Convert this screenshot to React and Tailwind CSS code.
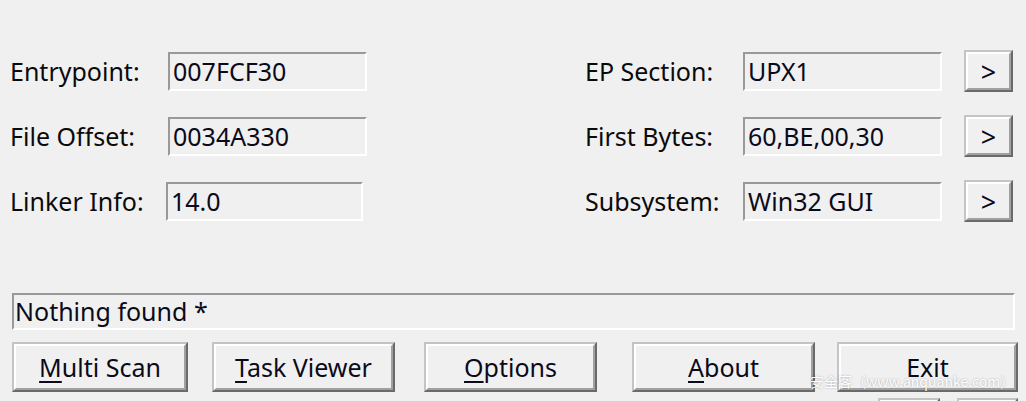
import React from "react";

function Edit({ value, w = "w-[199px]", ml = "" }) {
  return (
    <div
      className={`${w} ${ml} h-[39px] border-2 border-t-[#999999] border-l-[#999999] border-b-white border-r-white flex items-center pl-[3px] text-[25px] leading-none text-[#0a0a1a] whitespace-nowrap overflow-hidden`}
    >
      {value}
    </div>
  );
}

function Btn({ className = "", children }) {
  return (
    <div
      className={`${className} border-2 border-t-[#c4c4c4] border-l-[#c4c4c4] border-b-[#6a6a6a] border-r-[#6a6a6a] bg-[#f0f0f0]`}
    >
      <div className="h-full w-full border-2 border-t-white border-l-white border-b-[#a0a0a0] border-r-[#a0a0a0] flex items-center justify-center text-[25px] leading-none text-[#0a0a1a] whitespace-nowrap">
        {children}
      </div>
    </div>
  );
}

function Row({ l, lv, r, rv, lml = "", lw = "w-[199px]" }) {
  return (
    <div className="h-[42px] flex items-center">
      <div className="w-[585px] flex items-center">
        <div className="w-[168px] shrink-0 pl-[10px] text-[25px] leading-none text-[#0a0a0a] whitespace-nowrap">{l}</div>
        <Edit value={lv} w={lw} ml={lml} />
      </div>
      <div className="w-[158px] shrink-0 text-[25px] leading-none text-[#0a0a0a] whitespace-nowrap">{r}</div>
      <Edit value={rv} />
      <Btn className="ml-[22px] w-[49px] h-[42px]">
        <span className="text-[27px]">&gt;</span>
      </Btn>
    </div>
  );
}

export default function App() {
  return (
    <div className="relative w-[1026px] h-[401px] overflow-hidden bg-[#f0f0f0] font-['Noto_Sans',sans-serif]">
      <div className="pt-[50px] flex flex-col gap-[23px]">
        <Row l="Entrypoint:" lv="007FCF30" r="EP Section:" rv="UPX1" />
        <Row l="File Offset:" lv="0034A330" r="First Bytes:" rv="60,BE,00,30" />
        <Row l="Linker Info:" lv="14.0" r="Subsystem:" rv="Win32 GUI" lml="-ml-[2px]" lw="w-[197px]" />
      </div>

      <div className="mt-[71px] ml-[12px] w-[1003px] h-[37px] border-2 border-t-[#999999] border-l-[#999999] border-b-white border-r-white flex items-center pl-[1px] text-[25px] leading-none text-[#0a0a1a] whitespace-nowrap">
        Nothing found *
      </div>

      <div className="mt-[12px] flex h-[50px]">
        <Btn className="ml-[12px] w-[176px] h-[50px]">
          <span><span className="underline underline-offset-[4px]">M</span>ulti Scan</span>
        </Btn>
        <Btn className="ml-[24px] w-[183px] h-[50px]">
          <span><span className="underline underline-offset-[4px]">T</span>ask Viewer</span>
        </Btn>
        <Btn className="ml-[29px] w-[173px] h-[50px]">
          <span><span className="underline underline-offset-[4px]">O</span>ptions</span>
        </Btn>
        <Btn className="ml-[35px] w-[183px] h-[50px]">
          <span><span className="underline underline-offset-[4px]">A</span>bout</span>
        </Btn>
        <Btn className="ml-[22px] w-[181px] h-[50px]">
          <span>Exit</span>
        </Btn>
      </div>

      <div className="mt-[6px] flex">
        <Btn className="ml-[878px] w-[62px] h-[40px]"> </Btn>
        <Btn className="ml-[17px] w-[61px] h-[40px]"> </Btn>
      </div>

      <div className="absolute left-[810px] top-[374px] text-[14px] leading-none text-white font-['Noto_Sans_CJK_SC',sans-serif] whitespace-nowrap [text-shadow:0_0_2px_rgba(0,0,0,0.35)]">
        安全客（www.anquanke.com）
      </div>
    </div>
  );
}
